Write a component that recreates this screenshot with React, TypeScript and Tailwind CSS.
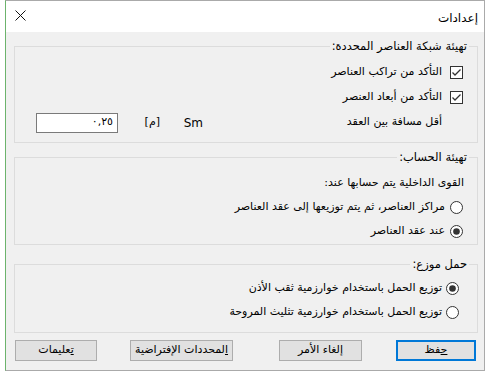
import React from "react";

const font = { fontFamily: '"DejaVu Sans", "Noto Sans", sans-serif' };

function CheckBox() {
  return (
    <svg width="13" height="13" viewBox="0 0 13 13" className="shrink-0">
      <rect x="0.5" y="0.5" width="12" height="12" fill="#ffffff" stroke="#333333" />
      <path d="M2.5 6.5 L5 9 L10.5 3.5" fill="none" stroke="#333333" strokeWidth="1.3" />
    </svg>
  );
}

function Radio({ checked }: { checked?: boolean }) {
  return (
    <svg width="13" height="13" viewBox="0 0 13 13" className="shrink-0">
      <circle cx="6.5" cy="6.5" r="6" fill="#ffffff" stroke="#333333" />
      {checked && <circle cx="6.5" cy="6.5" r="3.3" fill="#333333" />}
    </svg>
  );
}

function Group({
  title,
  className,
  children,
}: {
  title: string;
  className: string;
  children: React.ReactNode;
}) {
  return (
    <fieldset className={`border border-[#dcdcdc] mr-[6px] ml-[8px] ${className}`}>
      <legend className="mr-[8px] px-[2px] leading-[14px] text-[11.5px] text-black">{title}</legend>
      {children}
    </fieldset>
  );
}

function Btn({
  first,
  rest,
  className,
  primary,
}: {
  first: string;
  rest: string;
  className: string;
  primary?: boolean;
}) {
  return (
    <div
      className={`h-[21px] shrink-0 flex items-center justify-center whitespace-nowrap bg-[#e1e1e1] text-[11px] text-black ${
        primary ? "border-2 border-[#0078d7]" : "border border-[#adadad]"
      } ${className}`}
    >
      <span className="whitespace-nowrap">
        <span className="underline">{first}</span>
        {rest}
      </span>
    </div>
  );
}

export default function App() {
  return (
    <div className="w-[489px] h-[372px] bg-white" style={font}>
      <div
        dir="rtl"
        className="ml-[5px] w-[480px] h-[371px] border border-[#aaaaaa] border-l-[#6cb36c] bg-[#f0f0f0] flex flex-col"
      >
        <div className="h-[31px] shrink-0 bg-white flex items-center justify-between pr-[6px] pl-[9px]">
          <span className="text-[12px] text-black mt-[2px]">إعدادات</span>
          <svg width="11" height="11" viewBox="0 0 11 11" className="mt-[-3px]">
            <path d="M0.5 0.5 L10.5 10.5 M10.5 0.5 L0.5 10.5" stroke="#111111" strokeWidth="1" />
          </svg>
        </div>

        <Group title="تهيئة شبكة العناصر المحددة:" className="mt-[7px] pt-[7px] pb-[7px]">
          <div className="h-[25px] flex items-center gap-[8px] pr-[14px] text-[11px] text-black">
            <CheckBox />
            <span>التأكد من تراكب العناصر</span>
          </div>
          <div className="h-[25px] flex items-center gap-[8px] pr-[14px] text-[11px] text-black">
            <CheckBox />
            <span>التأكد من أبعاد العنصر</span>
          </div>
          <div className="h-[25px] flex items-center pr-[35px] text-[11px] text-black">
            <div className="w-[239px] shrink-0">أقل مسافة بين العقد</div>
            <div className="w-[43px] shrink-0" dir="ltr">
              <span className="block text-right text-[12px]">Sm</span>
            </div>
            <div className="w-[42px] shrink-0">[م]</div>
            <div className="w-[82px] h-[20px] shrink-0 bg-white border border-[#7a7a7a] flex items-center pr-[4px]">
              <span dir="ltr">٠,٢٥</span>
            </div>
          </div>
        </Group>

        <Group title="تهيئة الحساب:" className="mt-[7px] pt-[7px] pb-[1px]">
          <div className="h-[24px] flex items-center pr-[13px] text-[11px] text-black">
            القوى الداخلية يتم حسابها عند:
          </div>
          <div className="h-[24px] flex items-center gap-[5px] pr-[14px] text-[11px] text-black">
            <Radio />
            <span>مراكز العناصر، ثم يتم توزيعها إلى عقد العناصر</span>
          </div>
          <div className="h-[24px] flex items-center gap-[5px] pr-[14px] text-[11px] text-black">
            <Radio checked />
            <span>عند عقد العناصر</span>
          </div>
        </Group>

        <Group title="حمل موزع:" className="mt-[12px] pt-[5px] pb-[8px]">
          <div className="h-[24px] flex items-center gap-[4px] pr-[18px] text-[11px] text-black">
            <Radio checked />
            <span>توزيع الحمل باستخدام خوارزمية ثقب الأذن</span>
          </div>
          <div className="h-[24px] flex items-center gap-[4px] pr-[18px] text-[11px] text-black">
            <Radio />
            <span>توزيع الحمل باستخدام خوارزمية تثليث المروحة</span>
          </div>
        </Group>

        <div className="flex mt-[7px] mr-[8px]">
          <Btn first="ح" rest="فظ" className="w-[80px]" primary />
          <Btn first="إ" rest="لغاء الأمر" className="w-[83px] mr-[34px]" />
          <Btn first="ا" rest="لمحددات الإفتراضية" className="w-[103px] mr-[46px]" />
          <Btn first="ت" rest="عليمات" className="w-[82px] mr-[33px]" />
        </div>
      </div>
    </div>
  );
}
